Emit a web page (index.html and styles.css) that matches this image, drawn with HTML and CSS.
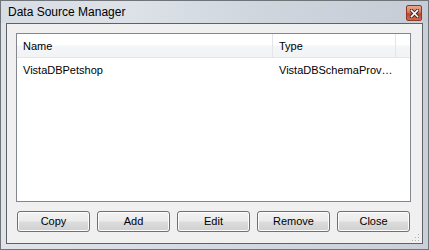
FILE: index.html
```html
<!DOCTYPE html>
<html>
<head>
<meta charset="utf-8">
<link rel="stylesheet" href="styles.css">
</head>
<body>
<div class="window">
  <div class="titlebar">
    <span class="title">Data Source Manager</span>
    <span class="close-btn">
      <svg width="9" height="9" viewBox="0 0 9 9">
        <path d="M1.5 1.5 L7.5 7.5 M7.5 1.5 L1.5 7.5" stroke="#3a2a26" stroke-width="3.4" stroke-linecap="square"/>
        <path d="M1.5 1.5 L7.5 7.5 M7.5 1.5 L1.5 7.5" stroke="#ffffff" stroke-width="1.6" stroke-linecap="square"/>
      </svg>
    </span>
  </div>
  <div class="client">
    <div class="list">
      <div class="header">
        <div class="hcell col-name">Name</div>
        <div class="hcell col-type">Type</div>
        <div class="hcell col-rest"></div>
      </div>
      <div class="row">
        <div class="cell col-name">VistaDBPetshop</div>
        <div class="cell col-type">VistaDBSchemaProvider</div>
      </div>
    </div>
    <div class="buttons">
      <button class="btn">Copy</button>
      <button class="btn">Add</button>
      <button class="btn">Edit</button>
      <button class="btn">Remove</button>
      <button class="btn">Close</button>
    </div>
    <div class="grip">
      <svg width="8" height="8" viewBox="0 0 8 8">
        <rect x="6" y="0" width="1" height="1" fill="#b0b0b0"/>
        <rect x="3" y="3" width="1" height="1" fill="#b0b0b0"/>
        <rect x="6" y="3" width="1" height="1" fill="#b0b0b0"/>
        <rect x="0" y="6" width="1" height="1" fill="#b0b0b0"/>
        <rect x="3" y="6" width="1" height="1" fill="#b0b0b0"/>
        <rect x="6" y="6" width="1" height="1" fill="#b0b0b0"/>
      </svg>
    </div>
  </div>
</div>
</body>
</html>
```
FILE: styles.css
```css
html, body {
  margin: 0;
  padding: 0;
}
body {
  font-family: "Liberation Sans", Arial, sans-serif;
  font-size: 11px;
  color: #000;
  width: 429px;
  height: 250px;
  overflow: hidden;
}
.window {
  box-sizing: border-box;
  width: 429px;
  height: 250px;
  border: 1px solid #707478;
  background: linear-gradient(to right, #dfe4ea 0%, #d6dce3 40%, #c9d0d8 100%);
  display: flex;
  flex-direction: column;
}
.titlebar {
  height: 22px;
  display: flex;
  align-items: flex-start;
  justify-content: space-between;
  background: linear-gradient(to right, #d7dde4 0%, #dde2e8 30%, #cfd6de 60%, #c5ccd5 100%);
}
.title {
  margin-left: 7px;
  margin-top: 4px;
  font-size: 12px;
  line-height: 15px;
  color: #000;
}
.close-btn {
  box-sizing: border-box;
  width: 16px;
  height: 16px;
  margin-top: 4px;
  margin-right: 6px;
  border: 1px solid #8a3a2a;
  border-radius: 2px;
  background: linear-gradient(to bottom, #e9a68e 0%, #d9785b 45%, #c3432a 55%, #cf6a4c 100%);
  display: flex;
  align-items: center;
  justify-content: center;
}
.close-btn svg {
  display: block;
}
.client {
  position: relative;
  box-sizing: border-box;
  margin: 0 5px 5px 5px;
  flex: 1;
  border: 1px solid #5e6268;
  background: #f0f0f0;
  padding: 9px 11px 11px 9px;
  display: flex;
  flex-direction: column;
}
.list {
  box-sizing: border-box;
  height: 169px;
  border: 1px solid #828790;
  background: #ffffff;
  overflow: hidden;
}
.header {
  display: flex;
  height: 23px;
  border-bottom: 1px solid #e5e5e5;
  background: linear-gradient(to bottom, #ffffff 0%, #ffffff 45%, #f4f5f7 55%, #f2f3f5 100%);
}
.hcell {
  box-sizing: border-box;
  height: 23px;
  line-height: 24px;
  padding-left: 6px;
  border-right: 1px solid #e3e5e8;
  white-space: nowrap;
  overflow: hidden;
}
.col-name {
  width: 256px;
  flex: none;
}
.col-type {
  width: 123px;
  flex: none;
}
.col-rest {
  flex: 1;
  border-right: none;
}
.row {
  display: flex;
  height: 20px;
  margin-top: 2px;
  line-height: 20px;
}
.cell {
  box-sizing: border-box;
  padding-left: 6px;
  white-space: nowrap;
  overflow: hidden;
  text-overflow: ellipsis;
}
.cell.col-type {
  padding-right: 2px;
}
.buttons {
  display: flex;
  gap: 7px;
  margin-top: 9px;
  margin-left: 1px;
}
.btn {
  box-sizing: border-box;
  width: 73px;
  height: 21px;
  padding: 0;
  margin: 0;
  border: 1px solid #707070;
  border-radius: 3px;
  background: linear-gradient(to bottom, #f2f2f2 0%, #ebebeb 48%, #dddddd 52%, #cfcfcf 100%);
  box-shadow: inset 0 0 0 1px #fcfcfc;
  font-family: "Liberation Sans", Arial, sans-serif;
  font-size: 11px;
  color: #000;
  line-height: 19px;
  text-align: center;
}
.grip {
  position: absolute;
  right: 2px;
  bottom: 1px;
  width: 8px;
  height: 8px;
}
.grip svg {
  display: block;
}
```
